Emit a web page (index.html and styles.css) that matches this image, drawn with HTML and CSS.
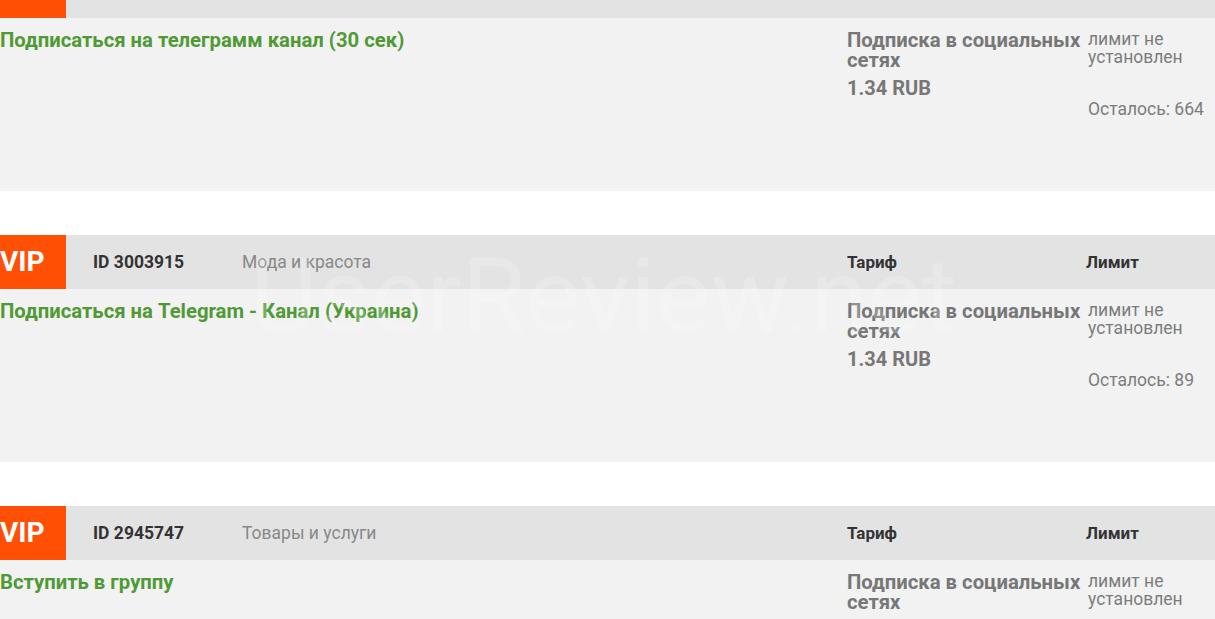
FILE: index.html
```html
<!DOCTYPE html>
<html lang="ru">
<head>
    <meta charset="UTF-8">
    <meta name="viewport" content="width=device-width, initial-scale=1.0">
    <title>Задания</title>
    <link rel="stylesheet" href="styles.css">
</head>
<body>

    <div class="tasks">
        <div class="task">
            <div class="task-head">
                <div class="task-meta">
                    <div class="badge">VIP</div>
                    <div class="task-id">ID 3004120</div>
                    <div class="task-cat">Развлечения</div>
                </div>
                <div class="head-col">Тариф</div>
                <div class="head-col">Лимит</div>
            </div>
            <div class="task-body">
                <a class="task-title" href="#">Подписаться на телеграмм канал (30 сек)</a>
                <div class="tariff">
                    <div class="tariff-name">Подписка в социальных сетях</div>
                    <div class="tariff-price">1.34 RUB</div>
                </div>
                <div class="limit">
                    <div>лимит не установлен</div>
                    <div class="left">Осталось: 664</div>
                </div>
            </div>
        </div>

        <div class="task">
            <div class="task-head">
                <div class="task-meta">
                    <div class="badge">VIP</div>
                    <div class="task-id">ID 3003915</div>
                    <div class="task-cat">Мода и красота</div>
                </div>
                <div class="head-col">Тариф</div>
                <div class="head-col">Лимит</div>
            </div>
            <div class="task-body">
                <a class="task-title" href="#">Подписаться на Telegram - Канал (Украина)</a>
                <div class="tariff">
                    <div class="tariff-name">Подписка в социальных сетях</div>
                    <div class="tariff-price">1.34 RUB</div>
                </div>
                <div class="limit">
                    <div>лимит не установлен</div>
                    <div class="left">Осталось: 89</div>
                </div>
            </div>
        </div>

        <div class="task">
            <div class="task-head">
                <div class="task-meta">
                    <div class="badge">VIP</div>
                    <div class="task-id">ID 2945747</div>
                    <div class="task-cat">Товары и услуги</div>
                </div>
                <div class="head-col">Тариф</div>
                <div class="head-col">Лимит</div>
            </div>
            <div class="task-body">
                <a class="task-title" href="#">Вступить в группу</a>
                <div class="tariff">
                    <div class="tariff-name">Подписка в социальных сетях</div>
                    <div class="tariff-price">1.34 RUB</div>
                </div>
                <div class="limit">
                    <div>лимит не установлен</div>
                    <div class="left">Осталось: 120</div>
                </div>
            </div>
        </div>

        <div class="watermark">UserReview.net</div>
    </div>

</body>
</html>
```

FILE: styles.css
```css
body {
    margin: 0;
    background: #fff;
    font-family: Roboto, "Noto Sans", sans-serif;
    overflow: hidden;
}
.tasks {
    position: relative;
    margin-top: -36px;
    margin-left: -10px;
}
.task {
    margin-bottom: 44px;
}
.task-head,
.task-body {
    display: grid;
    grid-template-columns: 1fr 239px 129px;
}
.task-head {
    height: 54px;
    background: #e3e3e3;
    align-items: center;
}
.task-meta {
    display: flex;
    align-items: center;
    height: 100%;
}
.badge {
    width: 66px;
    height: 100%;
    padding-left: 10px;
    background: #ff5005;
    color: #fff;
    font-size: 28px;
    font-weight: 700;
    line-height: 54px;
}
.task-id {
    width: 149px;
    margin-left: 27px;
    font-size: 17.5px;
    font-weight: 700;
    color: #333;
}
.task-cat {
    font-size: 17.5px;
    color: #888;
}
.head-col {
    font-size: 17px;
    font-weight: 700;
    color: #333;
}
.task-body {
    height: 173px;
    box-sizing: border-box;
    padding-top: 12px;
    background: #f2f2f2;
    align-items: start;
}
.task-title {
    padding-left: 10px;
    font-size: 20.3px;
    line-height: 20px;
    font-weight: 700;
    color: #4f9a35;
    text-decoration: none;
}
.tariff {
    color: #777;
    font-weight: 700;
}
.tariff-name {
    font-size: 20.3px;
    line-height: 20px;
}
.tariff-price {
    margin-top: 8px;
    font-size: 20px;
    line-height: 20px;
}
.limit {
    padding-left: 2px;
    font-size: 17.5px;
    line-height: 18px;
    color: #7c7c7c;
}
.limit .left {
    margin-top: 34px;
}
.watermark {
    position: absolute;
    left: 260px;
    top: 281px;
    font-size: 104px;
    line-height: 1;
    color: rgba(255, 255, 255, 0.2);
    pointer-events: none;
    white-space: nowrap;
}
```
